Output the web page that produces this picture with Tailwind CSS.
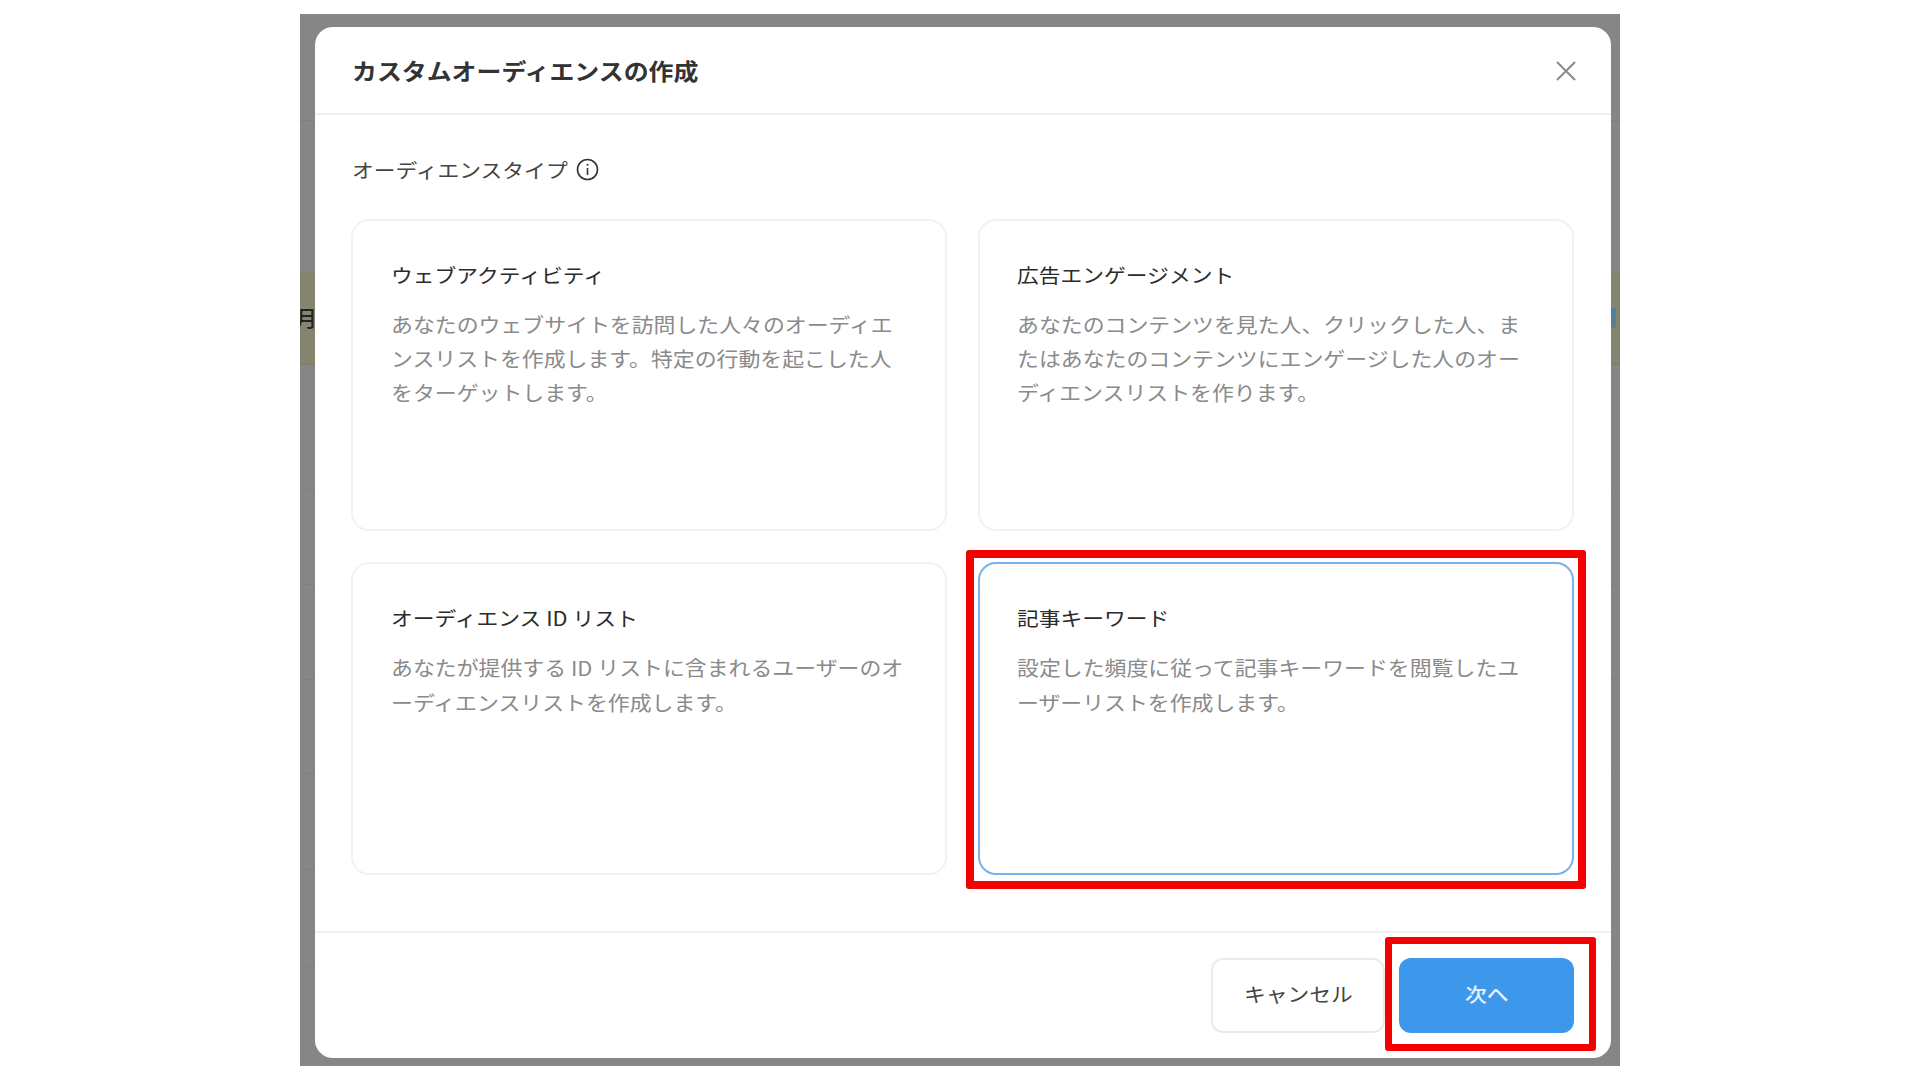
<!DOCTYPE html>
<html lang="ja">
<head>
<meta charset="utf-8">
<title>カスタムオーディエンスの作成</title>
<script src="https://cdn.jsdelivr.net/npm/@tailwindcss/browser@4"></script>
</head>
<body class="bg-white">
<div class="relative w-[1920px] h-[1080px] overflow-hidden bg-white font-['Noto_Sans_CJK_JP','Noto_Sans',sans-serif]">
  <!-- dimmed page behind the dialog -->
  <div class="absolute left-[300px] top-[14px] w-[1320px] h-[1052px] bg-[#868686] overflow-hidden">
    <div class="absolute left-0 right-0 top-[106px] h-px bg-[#7e7e7e]"></div>
    <div class="absolute left-0 right-0 top-[258px] h-[93px] bg-[#85846f] border-b border-[#7d7c6a]"></div>
    <div class="absolute left-[-4px] top-[293px] text-[21px] font-medium leading-none text-[#222]">月</div>
    <div class="absolute right-[4px] top-[294px] w-[6px] h-[20px] rounded-sm bg-linear-to-b from-[#4a7fa8] to-[#5f7f85]"></div>
    <div class="absolute left-0 right-0 top-[475px] h-px bg-[#7f7f7f]"></div>
    <div class="absolute left-0 right-0 top-[570px] h-px bg-[#7f7f7f]"></div>
    <div class="absolute left-0 right-0 top-[665px] h-px bg-[#7f7f7f]"></div>
    <div class="absolute left-0 right-0 top-[759px] h-px bg-[#7f7f7f]"></div>
    <div class="absolute left-0 right-0 top-[855px] h-px bg-[#7f7f7f]"></div>
    <div class="absolute left-0 right-0 top-[952px] h-px bg-[#7f7f7f]"></div>
  </div>

  <!-- dialog -->
  <div class="absolute left-[315px] top-[27px] w-[1296px] h-[1031px] bg-white rounded-[18px] flex flex-col">
    <header class="h-[88px] shrink-0 border-b-2 border-[#f0f0f0] pl-[37px] pr-[35px] flex items-center justify-between">
      <h1 class="text-[22.4px] font-bold leading-none text-[#333] origin-left scale-x-[1.112] whitespace-nowrap">カスタムオーディエンスの作成</h1>
      <svg class="w-[20px] h-[20px] mt-[2px] text-[#8a8a8a]" viewBox="0 0 20 20" fill="none" stroke="currentColor" stroke-width="2"><path d="M1 1 L19 19 M19 1 L1 19"/></svg>
    </header>

    <main class="flex-1 pl-[36px] pr-[37px] flex flex-col">
      <div class="h-[104px] shrink-0 pt-[38px] pl-[1px] flex items-start gap-[8px]">
        <span class="w-[216px] h-[34px] leading-[34px] text-[19.8px] text-[#444] origin-left scale-x-[1.1] whitespace-nowrap">オーディエンスタイプ</span>
        <svg class="w-[23px] h-[23px] mt-[5px] text-[#333]" viewBox="0 0 23 23" fill="none" stroke="currentColor" stroke-width="1.6"><circle cx="11.5" cy="11.5" r="10"/><path d="M11.5 10 V17"/><circle cx="11.5" cy="6.8" r="1" fill="currentColor" stroke="none"/></svg>
      </div>

      <div class="grid grid-cols-[596px_596px] grid-rows-[312px_313px] gap-x-[31px] gap-y-[31px]">
        <article class="border-2 border-[#f2f2f2] rounded-[18px] pt-[37px] px-[38px]">
          <h2 class="h-[34px] leading-[34px] text-[19.8px] font-normal text-[#2b2b2b] origin-left scale-x-[1.1] whitespace-nowrap">ウェブアクティビティ</h2>
          <p class="mt-[15.5px] text-[19.9px] leading-[34.2px] text-[#8a8a8a] origin-left scale-x-[1.1] whitespace-nowrap">あなたのウェブサイトを訪問した人々のオーディエ<br>ンスリストを作成します。特定の行動を起こした人<br>をターゲットします。</p>
        </article>
        <article class="border-2 border-[#f2f2f2] rounded-[18px] pt-[37px] pl-[37px] pr-[38px]">
          <h2 class="h-[34px] leading-[34px] text-[19.8px] font-normal text-[#2b2b2b] origin-left scale-x-[1.1] whitespace-nowrap">広告エンゲージメント</h2>
          <p class="mt-[15.5px] text-[19.9px] leading-[34.2px] text-[#8a8a8a] origin-left scale-x-[1.1] whitespace-nowrap">あなたのコンテンツを見た人、クリックした人、ま<br>たはあなたのコンテンツにエンゲージした人のオー<br>ディエンスリストを作ります。</p>
        </article>
        <article class="border-2 border-[#f2f2f2] rounded-[18px] pt-[37px] px-[38px]">
          <h2 class="h-[34px] leading-[34px] text-[19.8px] font-normal text-[#2b2b2b] origin-left scale-x-[1.1] whitespace-nowrap">オーディエンス ID リスト</h2>
          <p class="mt-[16px] text-[19.9px] leading-[34.6px] text-[#8a8a8a] origin-left scale-x-[1.1] whitespace-nowrap">あなたが提供する ID リストに含まれるユーザーのオ<br>ーディエンスリストを作成します。</p>
        </article>
        <article class="border-2 border-[#74b3ec] rounded-[18px] pt-[37px] pl-[37px] pr-[38px]">
          <h2 class="h-[34px] leading-[34px] text-[19.8px] font-normal text-[#2b2b2b] origin-left scale-x-[1.1] whitespace-nowrap">記事キーワード</h2>
          <p class="mt-[16px] text-[19.9px] leading-[34.6px] text-[#8a8a8a] origin-left scale-x-[1.1] whitespace-nowrap">設定した頻度に従って記事キーワードを閲覧したユ<br>ーザーリストを作成します。</p>
        </article>
      </div>
    </main>

    <footer class="h-[127px] shrink-0 border-t-2 border-[#f2f2f2] pt-[25px] pr-[37px] flex justify-end items-start gap-[14px]">
      <button class="w-[174px] h-[75px] pb-[3px] rounded-[12px] border-2 border-[#ebebeb] bg-white text-[19.8px] text-[#444]"><span class="inline-block scale-x-[1.1] whitespace-nowrap">キャンセル</span></button>
      <button class="w-[175px] h-[75px] pb-[3px] rounded-[12px] bg-[#3d97ea] text-[19.8px] font-medium text-[#e8f2fc]"><span class="inline-block scale-x-[1.1] whitespace-nowrap">次へ</span></button>
    </footer>
  </div>

  <!-- red annotation frames -->
  <div class="absolute left-[966px] top-[550px] w-[620px] h-[339px] border-[8px] border-[#f50000] rounded-[3px]"></div>
  <div class="absolute left-[1385px] top-[937px] w-[211px] h-[114px] border-[7px] border-[#f50000] rounded-[3px]"></div>
</div>
</body>
</html>
